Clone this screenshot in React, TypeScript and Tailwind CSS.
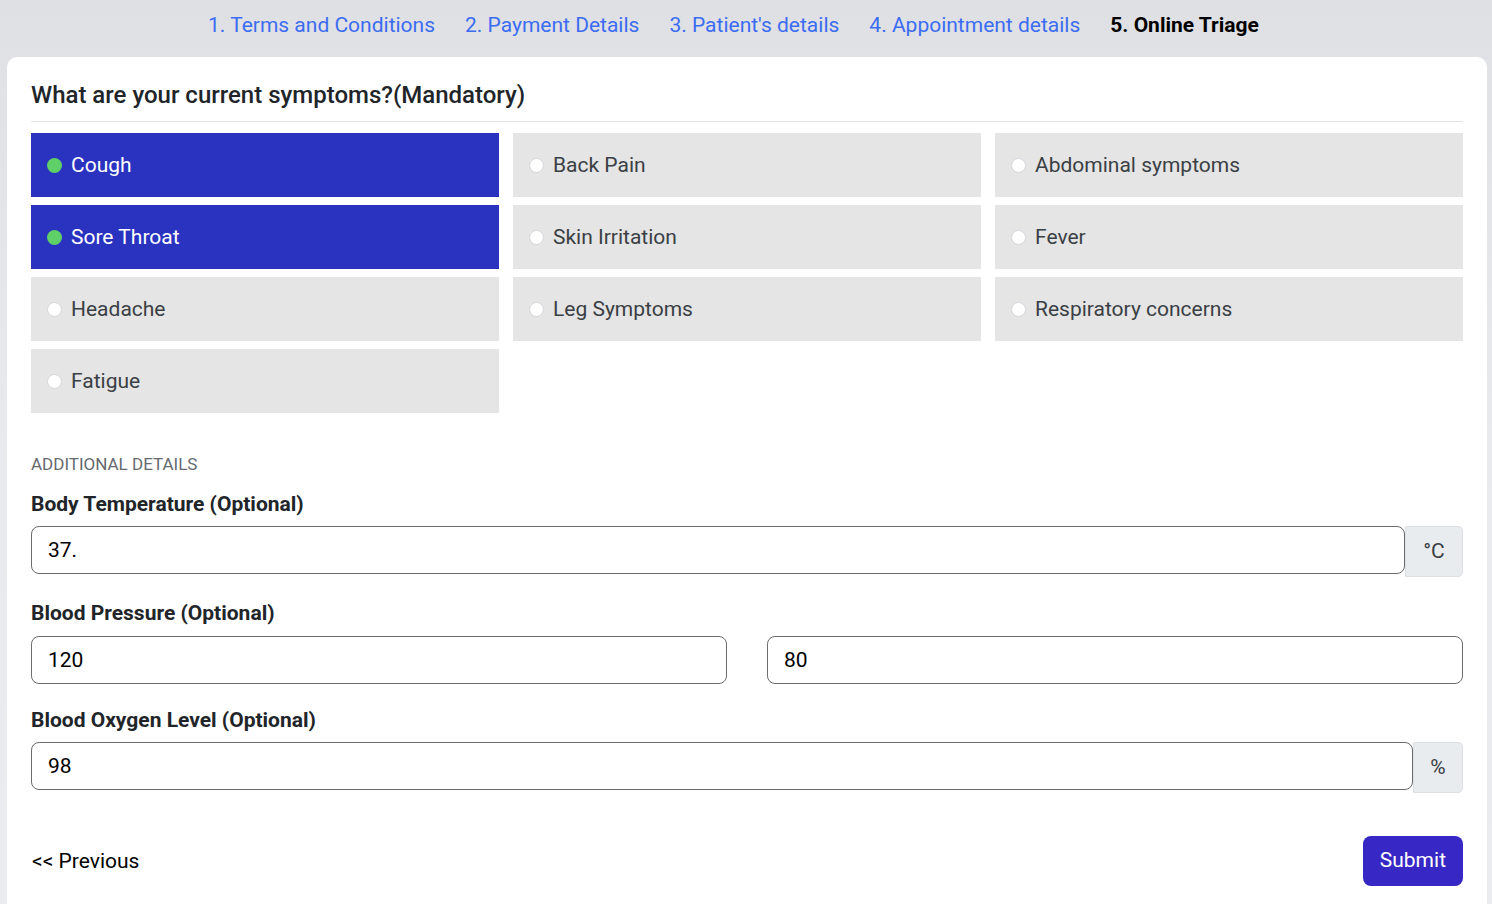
import { useState } from "react";

const symptoms = [
  "Cough",
  "Back Pain",
  "Abdominal symptoms",
  "Sore Throat",
  "Skin Irritation",
  "Fever",
  "Headache",
  "Leg Symptoms",
  "Respiratory concerns",
  "Fatigue",
];

const steps = [
  "1. Terms and Conditions",
  "2. Payment Details",
  "3. Patient's details",
  "4. Appointment details",
];

export default function App() {
  const [selected, setSelected] = useState<string[]>(["Cough", "Sore Throat"]);
  const [temp, setTemp] = useState("37.");
  const [sys, setSys] = useState("120");
  const [dia, setDia] = useState("80");
  const [oxy, setOxy] = useState("98");

  const toggle = (s: string) =>
    setSelected((prev) => (prev.includes(s) ? prev.filter((x) => x !== s) : [...prev, s]));

  return (
    <div
      className="min-h-[904px] bg-gradient-to-b from-[#dfe0e4] via-[#e9eaee] to-[#ebecf0] pl-[7px] pr-[5px] pt-[4px] text-[#212529]"
      style={{ fontFamily: "Roboto, 'Liberation Sans', sans-serif" }}
    >
      <nav className="flex h-[44px] items-center gap-[30px] pl-[201px] text-[21px]">
        {steps.map((s) => (
          <a key={s} href="#" className="text-[#3b6cf2]">
            {s}
          </a>
        ))}
        <span className="font-bold text-black">5. Online Triage</span>
      </nav>

      <div className="mt-[9px] min-h-[860px] rounded-t-[10px] bg-white px-6 pt-[22px]">
        <h2 className="text-[24px] font-medium leading-[32px]">
          What are your current symptoms?(Mandatory)
        </h2>
        <div className="mt-[10px] border-t border-[#e3e3e3]" />

        <div className="mt-[11px] grid grid-cols-3 gap-x-[14px] gap-y-2">
          {symptoms.map((s) => {
            const on = selected.includes(s);
            return (
              <button
                key={s}
                onClick={() => toggle(s)}
                className={`flex h-16 items-center gap-[9px] pl-4 pt-[2px] text-left text-[21px] ${
                  on ? "bg-[#2a32c0] text-white" : "bg-[#e5e5e5] text-[#3a3f44]"
                }`}
              >
                {on ? (
                  <span className="-mt-[2px] h-[15px] w-[15px] rounded-full bg-[#5fd068]" />
                ) : (
                  <span className="-mt-[2px] h-[15px] w-[15px] rounded-full border border-[#d2d5da] bg-white" />
                )}
                {s}
              </button>
            );
          })}
        </div>

        <p className="mt-[39px] text-[17px] uppercase leading-6 text-[#666a6e]">Additional details</p>

        <label className="mt-[16px] block text-[21px] font-bold leading-6">
          Body Temperature (Optional)
        </label>
        <div className="mt-[10px] flex items-start">
          <input
            value={temp}
            onChange={(e) => setTemp(e.target.value)}
            className="h-12 flex-1 rounded-[8px] border border-[#6c6c6c] px-4 text-[21px] text-black outline-none"
          />
          <span className="flex h-[51px] w-[58px] items-center justify-center rounded-r-[5px] border border-[#dcdfe3] bg-[#e9ecef] text-[21px] text-[#3a3f44]">
            °C
          </span>
        </div>

        <label className="mt-[24px] block text-[21px] font-bold leading-6">
          Blood Pressure (Optional)
        </label>
        <div className="mt-[11px] flex gap-10">
          <input
            value={sys}
            onChange={(e) => setSys(e.target.value)}
            className="h-12 min-w-0 flex-1 rounded-[8px] border border-[#6c6c6c] px-4 text-[21px] text-black outline-none"
          />
          <input
            value={dia}
            onChange={(e) => setDia(e.target.value)}
            className="h-12 min-w-0 flex-1 rounded-[8px] border border-[#6c6c6c] px-4 text-[21px] text-black outline-none"
          />
        </div>

        <label className="mt-[24px] block text-[21px] font-bold leading-6">
          Blood Oxygen Level (Optional)
        </label>
        <div className="mt-[10px] flex items-start">
          <input
            value={oxy}
            onChange={(e) => setOxy(e.target.value)}
            className="h-12 flex-1 rounded-[8px] border border-[#6c6c6c] px-4 text-[21px] text-black outline-none"
          />
          <span className="flex h-[51px] w-[50px] items-center justify-center rounded-r-[5px] border border-[#dcdfe3] bg-[#e9ecef] text-[21px] text-[#3a3f44]">
            %
          </span>
        </div>

        <div className="mt-[43px] flex items-center justify-between">
          <a href="#" className="pl-[1px] pt-[2px] text-[21px] text-black">
            &lt;&lt; Previous
          </a>
          <button className="h-[50px] rounded-[8px] bg-[#3727c4] px-[17px] text-[21px] text-white">
            Submit
          </button>
        </div>
      </div>
    </div>
  );
}
